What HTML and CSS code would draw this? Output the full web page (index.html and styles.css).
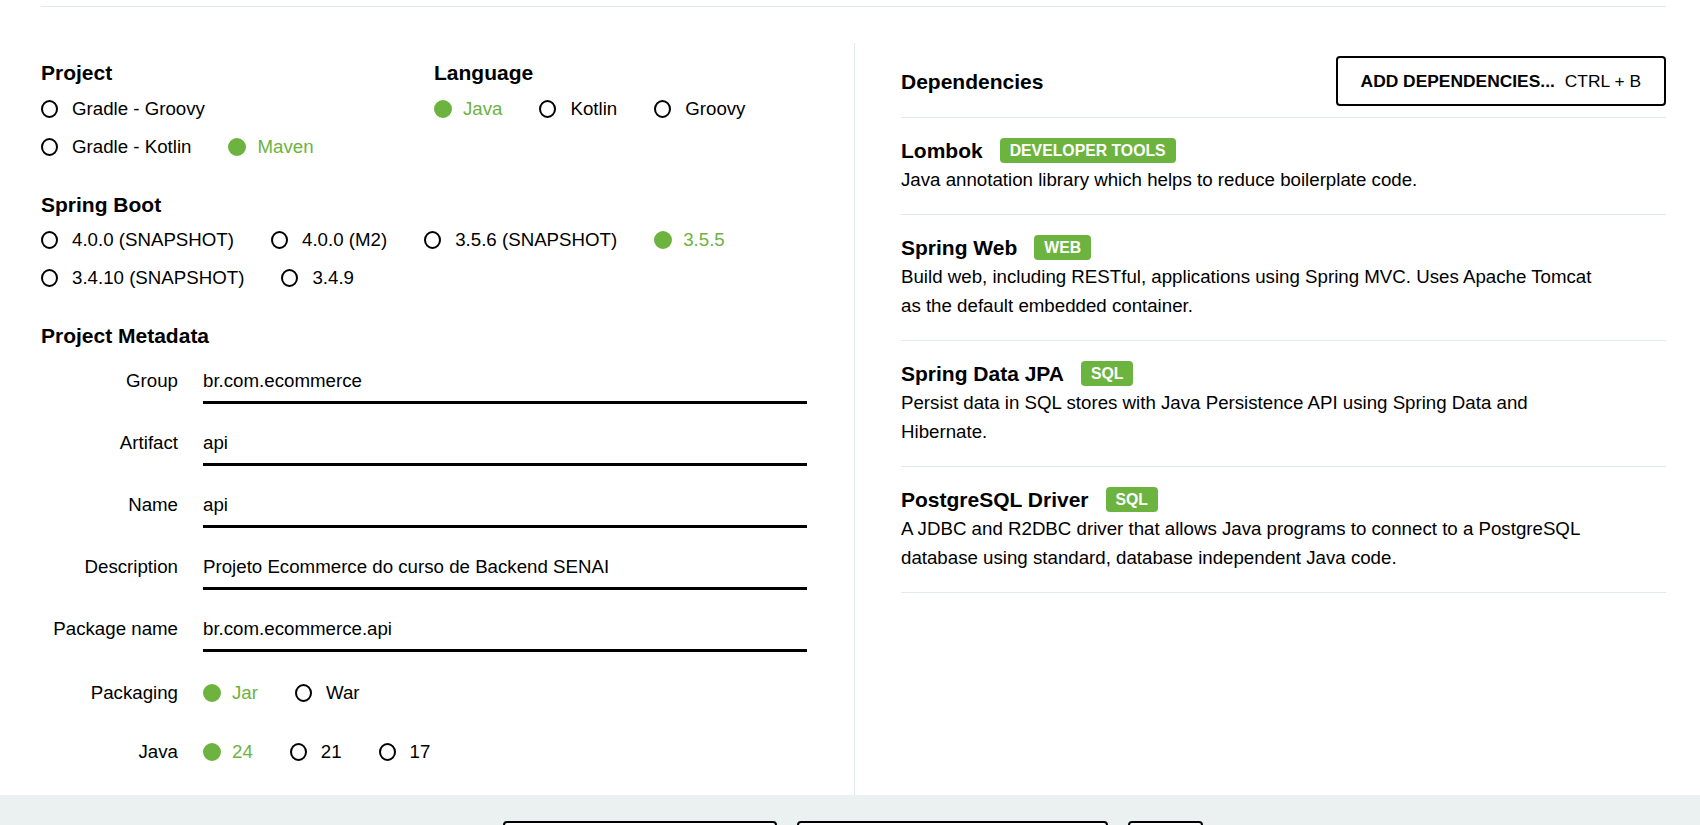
FILE: index.html
```html
<!DOCTYPE html>
<html lang="en">
<head>
<meta charset="utf-8">
<title>Spring Initializr</title>
<link rel="stylesheet" href="styles.css">
</head>
<body>
<div class="topbar"></div>
<main class="main">
  <section class="left">
    <div class="pair">
      <div class="group">
        <h2 class="label">Project</h2>
        <div class="radios">
          <div class="row"><span class="radio"><span class="ring"></span>Gradle - Groovy</span></div>
          <div class="row"><span class="radio"><span class="ring"></span>Gradle - Kotlin</span><span class="radio on"><span class="ring"></span>Maven</span></div>
        </div>
      </div>
      <div class="group">
        <h2 class="label">Language</h2>
        <div class="radios">
          <div class="row"><span class="radio on"><span class="ring"></span>Java</span><span class="radio"><span class="ring"></span>Kotlin</span><span class="radio"><span class="ring"></span>Groovy</span></div>
        </div>
      </div>
    </div>

    <div class="group section">
      <h2 class="label">Spring Boot</h2>
      <div class="radios">
        <div class="row"><span class="radio"><span class="ring"></span>4.0.0 (SNAPSHOT)</span><span class="radio"><span class="ring"></span>4.0.0 (M2)</span><span class="radio"><span class="ring"></span>3.5.6 (SNAPSHOT)</span><span class="radio on"><span class="ring"></span>3.5.5</span></div>
        <div class="row"><span class="radio"><span class="ring"></span>3.4.10 (SNAPSHOT)</span><span class="radio"><span class="ring"></span>3.4.9</span></div>
      </div>
    </div>

    <div class="group section">
      <h2 class="label">Project Metadata</h2>
      <div class="fields">
        <div class="field"><span class="flabel">Group</span><div class="input">br.com.ecommerce</div></div>
        <div class="field"><span class="flabel">Artifact</span><div class="input">api</div></div>
        <div class="field"><span class="flabel">Name</span><div class="input">api</div></div>
        <div class="field"><span class="flabel">Description</span><div class="input">Projeto Ecommerce do curso de Backend SENAI</div></div>
        <div class="field"><span class="flabel">Package name</span><div class="input">br.com.ecommerce.api</div></div>
        <div class="field rfield"><span class="flabel">Packaging</span><div class="row"><span class="radio on"><span class="ring"></span>Jar</span><span class="radio"><span class="ring"></span>War</span></div></div>
        <div class="field rfield"><span class="flabel">Java</span><div class="row"><span class="radio on"><span class="ring"></span>24</span><span class="radio"><span class="ring"></span>21</span><span class="radio"><span class="ring"></span>17</span></div></div>
      </div>
    </div>
  </section>

  <section class="right">
    <div class="dep-head">
      <h2 class="label">Dependencies</h2>
      <button class="add-btn"><strong>ADD DEPENDENCIES...</strong><span class="kbd">CTRL + B</span></button>
    </div>
    <div class="dep">
      <div class="dep-title">Lombok<span class="badge">DEVELOPER TOOLS</span></div>
      <p class="dep-desc">Java annotation library which helps to reduce boilerplate code.</p>
    </div>
    <div class="dep">
      <div class="dep-title">Spring Web<span class="badge">WEB</span></div>
      <p class="dep-desc">Build web, including RESTful, applications using Spring MVC. Uses Apache Tomcat as the default embedded container.</p>
    </div>
    <div class="dep">
      <div class="dep-title">Spring Data JPA<span class="badge">SQL</span></div>
      <p class="dep-desc">Persist data in SQL stores with Java Persistence API using Spring Data and Hibernate.</p>
    </div>
    <div class="dep">
      <div class="dep-title">PostgreSQL Driver<span class="badge">SQL</span></div>
      <p class="dep-desc">A JDBC and R2DBC driver that allows Java programs to connect to a PostgreSQL database using standard, database independent Java code.</p>
    </div>
  </section>
</main>
<footer class="actions">
  <button class="act act-gen" aria-label="Generate"></button>
  <button class="act act-exp" aria-label="Explore"></button>
  <button class="act act-share" aria-label="Share"></button>
</footer>
</body>
</html>
```

FILE: styles.css
```css
html, body {
  margin: 0;
  padding: 0;
  height: 100%;
  overflow: hidden;
  background: #fff;
}
body {
  font-family: "Liberation Sans", Arial, sans-serif;
  font-size: 18.7px;
  color: #000;
}
.topbar {
  height: 6px;
  margin: 0 34px 0 41px;
  border-bottom: 1px solid #e3e9e9;
}
.main {
  display: grid;
  grid-template-columns: 813px 1fr;
  margin: 36px 34px 0 41px;
  height: 752px;
}
.left {
  padding: 15px 47px 0 0;
}
.pair {
  display: grid;
  grid-template-columns: 393px 1fr;
}
.label {
  margin: 0;
  font-size: 21px;
  font-weight: bold;
  line-height: 29px;
  height: 29px;
}
.radios {
  margin-top: 2.5px;
}
.row {
  display: flex;
  align-items: center;
  height: 38px;
}
.radio {
  display: inline-flex;
  align-items: center;
  margin-right: 37px;
  white-space: nowrap;
}
.ring {
  box-sizing: border-box;
  width: 17px;
  height: 18px;
  margin: 0 14px 0 0;
  border: 2px solid #000;
  border-radius: 50%;
}
.radio.on {
  color: #6db33f;
}
.radio.on .ring {
  width: 18px;
  height: 18px;
  margin: 0 11px 0 0;
  border-color: #6db33f;
  background: #6db33f;
}
.section {
  margin-top: 24px;
}
.fields {
  margin-top: 14.5px;
}
.field {
  display: grid;
  grid-template-columns: 137px 1fr;
  column-gap: 25px;
  margin-bottom: 23px;
}
.flabel {
  text-align: right;
  padding-top: 3px;
  line-height: 26px;
  white-space: nowrap;
}
.input {
  padding: 3px 0 7px;
  line-height: 26px;
  border-bottom: 3px solid #000;
  white-space: nowrap;
}
.field.rfield {
  margin-top: -1px;
  margin-bottom: 22px;
}
.rfield .flabel {
  padding-top: 0;
  line-height: 38px;
}
.right {
  border-left: 1px solid #e3e9e9;
  padding-left: 46px;
}
.dep-head {
  display: flex;
  align-items: center;
  justify-content: space-between;
  padding: 13px 0 11px;
  border-bottom: 1px solid #e3e9e9;
}
.add-btn {
  box-sizing: border-box;
  height: 50px;
  padding: 0 23px;
  border: 2px solid #000;
  border-radius: 4px;
  background: #fff;
  color: #000;
  font-family: "Liberation Sans", Arial, sans-serif;
  font-size: 17.4px;
  display: inline-flex;
  align-items: center;
}
.add-btn strong {
  font-weight: bold;
}
.kbd {
  margin-left: 10px;
  font-weight: normal;
}
.dep {
  padding: 18px 0 20px;
  border-bottom: 1px solid #e3e9e9;
}
.dep-title {
  display: flex;
  align-items: center;
  height: 29px;
  font-size: 21px;
  font-weight: bold;
}
.badge {
  display: inline-block;
  margin-left: 17px;
  height: 25px;
  line-height: 25px;
  padding: 0 10px;
  border-radius: 4px;
  background: #6db33f;
  color: #fff;
  font-size: 15.8px;
  font-weight: bold;
}
.dep-desc {
  margin: 0;
  max-width: 705px;
  line-height: 29px;
}
.actions {
  height: 30px;
  overflow: hidden;
  background: #ebf1f1;
  display: flex;
  justify-content: center;
  gap: 20px;
  padding: 26px 0 0 6px;
  box-sizing: border-box;
}
.act {
  flex: none;
  height: 50px;
  border: 2px solid #000;
  border-radius: 4px;
  background: #fff;
}
.act-gen { width: 274px; }
.act-exp { width: 311px; }
.act-share { width: 75px; }
```
